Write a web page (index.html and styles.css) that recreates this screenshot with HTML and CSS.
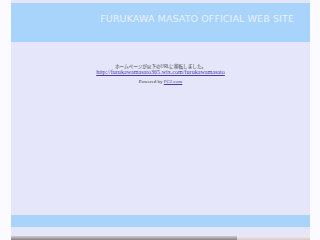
FILE: index.html
```html
<!DOCTYPE html>
<html>
<head>
<meta charset="utf-8">
<link rel="stylesheet" href="styles.css">
</head>
<body>
<div class="page">
  <div class="header"><span class="title">FURUKAWA MASATO OFFICIAL WEB SITE</span></div>
  <div class="content">
    <p class="notice">ホームページが以下のURLに移転しました。</p>
    <p class="url"><a href="#">http://furukawamasato365.wix.com/furukawamasato</a></p>
    <p class="powered">Powered by <a href="#">FC2.com</a></p>
  </div>
  <div class="footer-bar"></div>
  <div class="bottom">
    <div class="shade-left"></div>
    <div class="shade-right"></div>
  </div>
</div>
</body>
</html>
```
FILE: styles.css
```css
html, body { margin: 0; padding: 0; }
body { background: #fbfbff; width: 320px; height: 240px; overflow: hidden; }
.page {
  margin-left: 11px;
  width: 299px;
  height: 240px;
  background: #e6e6fa;
  padding-top: 3px;
  box-sizing: border-box;
  display: flex;
  flex-direction: column;
}
.header {
  height: 39px;
  background: #a8d3fb;
  display: flex;
  align-items: center;
  justify-content: flex-end;
  padding-right: 16px;
  box-sizing: border-box;
}
.title {
  font-family: "DejaVu Sans", sans-serif;
  font-size: 9.5px;
  color: #e8f1ff;
  letter-spacing: 0.1px;
  margin-top: -9px;
}
.content {
  text-align: center;
  padding-top: 21px;
  flex: 1;
}
.content p { margin: 0; }
.notice {
  font-family: "Noto Sans CJK JP", sans-serif;
  font-size: 4.6px;
  line-height: 6px;
  color: #333;
}
.url {
  font-family: "Liberation Serif", serif;
  font-size: 6.1px;
  line-height: 7px;
}
.url a { color: #4b3aa8; }
.powered {
  margin-top: 2px !important;
  font-family: "Liberation Serif", serif;
  font-size: 5px;
  line-height: 7px;
  color: #333;
}
.powered a { color: #4b3aa8; }
.footer-bar {
  height: 12px;
  background: #a8d3fb;
  margin-bottom: 9px;
}
.bottom {
  height: 4px;
  display: flex;
}
.shade-left { width: 226px; background: linear-gradient(#d0ccd8, #8a7f7f); }
.shade-right { flex: 1; background: linear-gradient(#eee, #d8c8c8); }
```
